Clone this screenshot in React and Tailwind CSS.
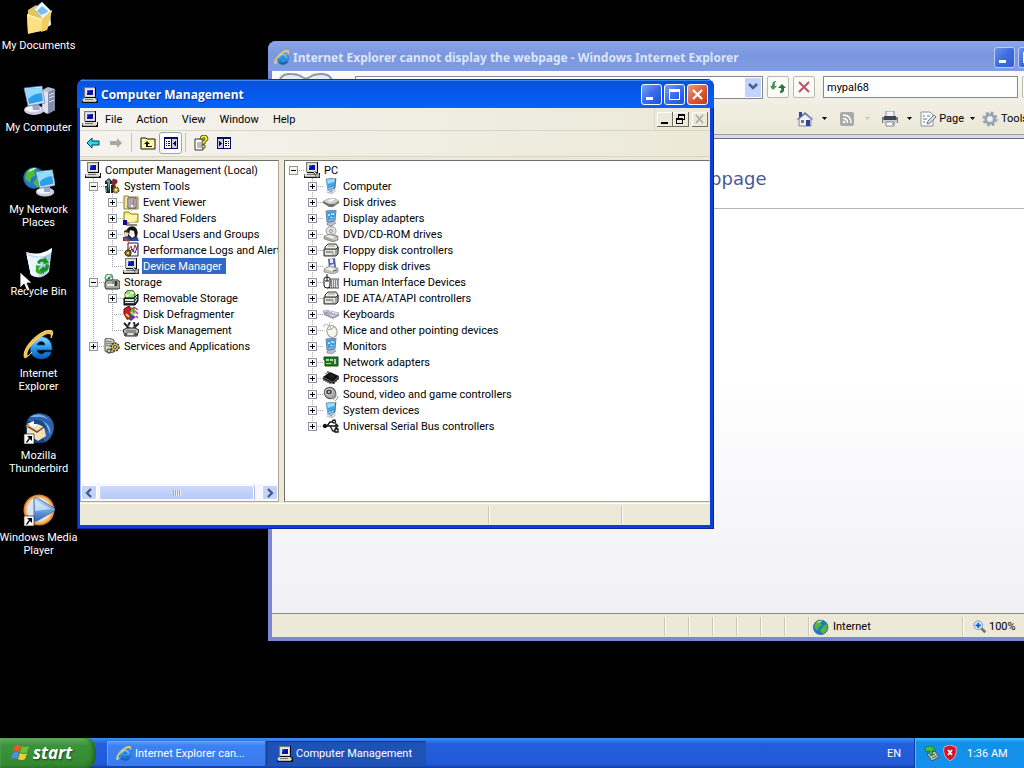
import React from "react";

/* ---------- Logos and icons ---------- */

function Svg({ size = 16, className = "", box = 16, children }) {
  return (
    <svg width={size} height={size} viewBox={`0 0 ${box} ${box}`} className={`block shrink-0 ${className}`} aria-hidden="true">
      {children}
    </svg>
  );
}

function ComputerIcon({ size, wrench }) {
  return (
    <Svg size={size}>
      <path d="M2 0h12v10H2z" fill="#d6d3c8" />
      <path d="M2 0h11v1H3v9H2z" fill="#7d7d78" />
      <path d="M13 0h1v11H3v-1h10z" fill="#000" />
      <path d="M4 2h8v7H4z" fill="#e9e9ee" />
      <path d="M5 3h6v5H5z" fill="#0a12a8" />
      <path d="M5 3h3v1H6v2H5z" fill="#3d54e6" />
      <path d="M2 11h11l2 3H0z" fill="#dedbd0" />
      <path d="M0 14h15v-3h1v5H0z" fill="#111" />
      <path d="M0 12h1v2H0z" fill="#777" />
      <path d="M1 14h13v1H1z" fill="#b5b2a8" />
      <path d="M3 12h8v1H3z" fill="#77756e" />
      {wrench && (
        <g>
          <path d="M10 10l3 3" stroke="#555" strokeWidth="3" />
          <path d="M10 10l3 3" stroke="#eee" strokeWidth="1" />
          <circle cx="13.500" cy="13.500" r="2" fill="#b5b5af" stroke="#444" strokeWidth=".6" />
        </g>
      )}
    </Svg>
  );
}

function IELogo({ size = 16 }) {
  return (
    <Svg size={size} box={32}>
      <defs>
        <linearGradient id="ieBlue" x1="0" y1="0" x2="0" y2="1">
          <stop offset="0" stopColor="#8bdcff" />
          <stop offset=".5" stopColor="#2a9be8" />
          <stop offset="1" stopColor="#0a5bb8" />
        </linearGradient>
      </defs>
      <path d="M27 25C23 30 15 30 10 26C5 20 7 11 13 8C20 4 29 9 29 18V20H14C15 25 20 25 22 22H28ZM14 15H22C21 10 15 11 14 15Z" fill="url(#ieBlue)" stroke="#0b4e93" strokeWidth=".8" />
      <path d="M9 22C3 28 1 30 1 25C1 17 12 5 22 1C29-2 32 1 28 8C29 4 27 2 21 5C12 9 3 20 4 25C4 27 6 26 9 22Z" fill="#f3c33a" stroke="#fff2a0" strokeWidth=".7" />
    </Svg>
  );
}

function DocumentsIcon() {
  return (
    <Svg size={32} box={32}>
      <path d="M5 8l8-5 6 5v20l-14-2z" fill="#e6c552" />
      <path d="M11 7l8-7 9 9-6 10z" fill="#f1faff" stroke="#8bb6d8" strokeWidth=".7" />
      <path d="M14 9l5-5 6 5-4 7z" fill="#7dbbe9" />
      <path d="M18 13l9-4 1 14-7 4z" fill="#e8f5ff" />
      <path d="M4 12l14 5 11-9-5 20-19 3z" fill="#fff0ac" />
      <path d="M4 12l15 5-1 12-13 3z" fill="#fbe182" />
      <path d="M19 17l10-9-5 20-6 2z" fill="#f0cd62" />
      <path d="M5 13l14 5" stroke="#fff9cd" strokeWidth="1.200" />
    </Svg>
  );
}

function DesktopMonitor({ tower }) {
  return (
    <g>
      {tower && (
        <g>
          <path d="M19 6l6-3 7 2v21l-8 4-5-3z" fill="#b9bdd4" />
          <path d="M25 8l7-3v21l-7 4z" fill="#858cae" />
          <path d="M20 7l5 1v21l-5-2z" fill="#dfe2ef" />
          <path d="M26 11l5-2M26 14l5-2M26 18l5-2" stroke="#e8eaf8" />
        </g>
      )}
      <ellipse cx="11" cy="26" rx="10" ry="5" fill="#c9ccdf" />
      <ellipse cx="10" cy="25" rx="8" ry="3" fill="#f2f4fc" />
      <path d="M9 19h7l1 7h-7z" fill="#9da6c9" />
      <path d="M1 4l18-2 3 17-17 3z" fill="#cfe3f6" stroke="#6077a8" strokeWidth=".7" />
      <path d="M3 5l15-1 2 13-14 3z" fill="#2e9eeb" />
      <path d="M3 5l15-1 1 5q-8 0-14 6z" fill="#92dcff" />
    </g>
  );
}

function MyComputerIcon() {
  return <Svg size={32} box={32}><DesktopMonitor tower /></Svg>;
}

function GlobeShape() {
  return (
    <g>
      <circle cx="11" cy="12" r="10.500" fill="#2276cb" />
      <path d="M3 7q3-6 11-5l-3 4 2 3-5 3-1 5-5-4zM15 10l6-3v8l-6 7-5-5z" fill="#54b83b" />
      <path d="M5 6q4-5 9-4l-6 3z" fill="#dcfbd2" />
      <circle cx="11" cy="12" r="10.500" fill="none" stroke="#144f7c" strokeWidth=".8" />
    </g>
  );
}

function NetworkIcon() {
  return (
    <Svg size={32} box={32}>
      <GlobeShape />
      <g transform="translate(12 2) scale(.92)"><DesktopMonitor /></g>
    </Svg>
  );
}

function RecycleIcon() {
  return (
    <Svg size={32} box={32}>
      <path d="M3 4q13 5 26-4l-3 24q-8 9-18 3z" fill="#c5dcec" />
      <path d="M3 4q13 5 26-4l-1 6Q15 12 3 4z" fill="#f5fcff" />
      <path d="M4 7q8 4 14 2L15 29q-4 0-7-2z" fill="#eaf5fc" />
      <path d="M20 9l8-4-3 18-7 6z" fill="#a7c9df" />
      <path d="M14 15q2-5 7-4l1-2 4 6-6 1 1-2q-4-1-4 2zM26 17q0 6-5 7v2l-5-4 5-4v2q2-1 2-4z" fill="#169223" />
      <path d="M13 17l5 1-2 2q-1 3 3 3v3q-8 0-6-6z" fill="#31ad2e" />
      <path d="M4 6l4 20" stroke="white" strokeWidth="1" />
    </Svg>
  );
}

function Shortcut() {
  return (
    <g>
      <path d="M1 22h10v10H1z" fill="#fff" stroke="#222" strokeWidth=".7" />
      <path d="M4 24h5v5l-2-2-3 4-1-1 3-4z" fill="#000" />
    </g>
  );
}

function ThunderbirdIcon() {
  return (
    <Svg size={32} box={32}>
      <path d="M3 12Q5 0 17 2q13 0 14 15-1 9-8 13-11 4-19-4-2-7-1-14z" fill="#173e78" />
      <path d="M5 8Q11-1 21 2q10 3 10 14-2 10-9 14-5-12-17-22z" fill="#2d62a8" />
      <path d="M7 5q10-6 19 3-7-4-12-3zM20 9q9 5 7 14-2-8-7-14z" fill="#76b4e8" />
      <path d="M4 14l8-4 9 5 2 9-8 5-11-7z" fill="#f5deb8" />
      <path d="M4 14l10 6 7-5" fill="none" stroke="#704d35" strokeWidth="1.500" />
      <path d="M4 12l7-3 4 4-5 2z" fill="#fff" />
      <path d="M2 14l4-2 1 3z" fill="#d8a536" />
      <path d="M11 8q10-2 14 12-6-9-14-8z" fill="#174a8c" />
      <Shortcut />
    </Svg>
  );
}

function MediaIcon() {
  return (
    <Svg size={32} box={32}>
      <defs>
        <radialGradient id="wmpRing"><stop offset=".6" stopColor="#fff4dd" /><stop offset=".85" stopColor="#f2b469" /><stop offset="1" stopColor="#c96a19" /></radialGradient>
        <linearGradient id="wmpPlay" x1="0" y1="0" x2="0" y2="1"><stop offset="0" stopColor="#c1e2ff" /><stop offset="1" stopColor="#286ac1" /></linearGradient>
      </defs>
      <circle cx="16" cy="16" r="15.500" fill="url(#wmpRing)" />
      <circle cx="15" cy="15" r="11" fill="#dce5ef" />
      <path d="M11 5q0-2 3-1l17 10q2 2 0 3L14 27q-3 1-3-1z" fill="url(#wmpPlay)" stroke="#507eae" />
      <path d="M12 6l16 9-16 2z" fill="#e4f4ff" opacity=".65" />
      <Shortcut />
    </Svg>
  );
}

function FlagLogo() {
  return (
    <Svg size={20} box={20}>
      <path d="M4 3q3-2 6 0L8 9Q5 7 2 9z" fill="#ee5527" />
      <path d="M11 3q4 2 7 0l-2 6q-3 2-7 0z" fill="#73bd38" />
      <path d="M2 10q3-2 6 0l-2 6q-3-2-6 0z" fill="#4c8df2" />
      <path d="M9 10q4 2 7 0l-2 6q-3 2-7 0z" fill="#f7cb36" />
    </Svg>
  );
}

/* Small glyphs used by the two trees */
const glyphs = {
  tools: (
    <g>
      <path d="M1 3l4-3 3 3v3H6v9H3V6H1z" fill="#222" />
      <path d="M2 3l3-2 1 2-1 10H4V5z" fill="#6aa8a3" />
      <path d="M9 1l4 1v3l-2 1 1 8H9L8 4z" fill="#a11b1b" stroke="#333" strokeWidth=".6" />
      <path d="M1 8h3l1 7H2zM7 7h2v8H7z" fill="#222" />
      <path d="M2 9h1v5H2z" fill="#3f8b80" />
      <circle cx="12" cy="12" r="3" fill="#b89e24" stroke="#322b0c" strokeDasharray="2 1" />
      <circle cx="12" cy="12" r="1" fill="#fff" />
    </g>
  ),
  event: (
    <g>
      <path d="M1 2h4l1 1h9v12H1z" fill="#efe3a0" stroke="#877a3c" />
      <path d="M5 4h8v10H5z" fill="#fff" stroke="#444" />
      <path d="M7 5v8M11 5v8" stroke="#5c4688" />
      <path d="M8 6h3M8 8h3M8 10h3" stroke="#c12e2e" />
    </g>
  ),
  shared: (
    <g>
      <path d="M1 2h5l2 2h7v8H1z" fill="#f4ea7b" stroke="#877f24" />
      <path d="M2 5h12l-2 7H2z" fill="#fff6a5" />
      <path d="M0 11h4l3 3h7v2H4l-4-2z" fill="#8e887c" />
      <path d="M0 10h4v5H0z" fill="#101080" />
    </g>
  ),
  users: (
    <g>
      <path d="M4 3q3-4 8-2 4 3 2 9l-4 5-5-3z" fill="#111" />
      <path d="M7 4l4 1 1 5-3 2-3-3z" fill="#f7f2e5" />
      <path d="M1 5l4-2 1 5-4 2z" fill="#333" />
      <path d="M2 6l4 1-2 4-3-1z" fill="#ead7b4" />
      <path d="M0 11l5-1 3 3 6-3 2 5H0z" fill="#28489d" />
      <path d="M1 13l5 2" stroke="#d23c28" strokeWidth="2" />
    </g>
  ),
  performance: (
    <g>
      <path d="M5 1h10v13H5z" fill="#fff" stroke="#222" />
      <path d="M5 9l3-5 2 6 2-7 2 5" fill="none" stroke="#cc2036" />
      <path d="M6 11l3-4 3 4 3-8" fill="none" stroke="#2337ad" />
      <circle cx="5" cy="11" r="3" fill="#c5a82b" stroke="#40340b" />
      <path d="M5 7v8M1 11h8M3 8l5 6M8 8l-5 6" stroke="#5b4b14" />
      <circle cx="5" cy="11" r="1" fill="#fff" />
    </g>
  ),
  storage: (
    <g>
      <circle cx="5" cy="4" r="4" fill="#d9f4dc" stroke="#477c64" />
      <path d="M5 4l2-3 2 2zM5 4L1 5l2 2z" fill="#49b875" />
      <circle cx="5" cy="4" r="1" fill="#333" />
      <path d="M1 8l3-2h10l2 2v6l-2 1H2l-1-2z" fill="#a8aaa3" stroke="#333" />
      <path d="M8 6h6v6H8z" fill="#858982" />
      <path d="M3 10h7v2H3z" fill="#edefe8" />
      <path d="M11 7h2v5h-2z" fill="#333" />
    </g>
  ),
  removable: (
    <g>
      <circle cx="7" cy="5" r="5" fill="#8ee18c" stroke="#1b411e" />
      <path d="M7 5l1-4 4 2zM7 5l-4 3-1-4z" fill="#f2ff93" />
      <path d="M1 8h10l4-4v7l-3 4H1z" fill="#313736" stroke="#000" />
      <path d="M2 9h9v2H2zM2 12h9v1H2z" fill="#dce7e3" />
      <path d="M12 9l2-3M12 12l2-3" stroke="#fff" />
    </g>
  ),
  defrag: (
    <g>
      <path d="M1 3l5-3 3 4-3 7-5-3z" fill="#d91429" stroke="#4b1010" />
      <path d="M7 4l4-3v7l-5 4z" fill="#64bb4b" stroke="#245e34" />
      <path d="M2 10l5-3 6 4-5 4z" fill="#573e93" />
      <path d="M1 9l3 5 3-1-2-4z" fill="#a3202c" />
      <path d="M3 8l3 3M8 6l3 3" stroke="#efce36" strokeWidth="2" />
      <path d="M11 1l4 3M12 5l3 3M13 10l2 2" stroke="#b83baf" strokeWidth="1.500" />
    </g>
  ),
  diskManagement: (
    <g>
      <path d="M1 1l6 6M7 0L4 6M11 0l1 6M16 1l-7 7" stroke="#222" strokeWidth="2" />
      <path d="M4 2l3 4M10 1l1 4" stroke="#63a9df" />
      <path d="M0 8l4-2h8l4 2-2 6H2z" fill="#bbb" stroke="#222" />
      <path d="M3 8h10v3H3z" fill="#8c8c88" />
      <path d="M1 11h3v3H1zM11 11h3v3h-3z" fill="#555" />
      <path d="M5 12h5" stroke="#fff" />
    </g>
  ),
  services: (
    <g>
      <path d="M1 1l4-1 5 2v12l-5 1-4-2z" fill="#d5d4ca" stroke="#55554f" />
      <path d="M2 3l6 1M2 5l6 1M2 7l5 1" stroke="#777" />
      <circle cx="11" cy="9" r="4" fill="#cebd61" stroke="#3b371f" strokeWidth="1.500" strokeDasharray="2 1" />
      <circle cx="11" cy="9" r="1.500" fill="#fff" stroke="#333" />
      <circle cx="5" cy="13" r="2" fill="#e5da79" stroke="#333" />
    </g>
  ),
  monitor: (
    <g>
      <path d="M4 12l6-2 3 3-4 3-5-1z" fill="#b9bed1" />
      <path d="M3 13l5 1 4-1" stroke="#eef1fa" strokeWidth="1" />
      <path d="M3 1l10-1-1 10-7 2z" fill="#98cee9" stroke="#6989a2" strokeWidth=".8" />
      <path d="M4 2l7-1v8l-6 1z" fill="#37a6ee" />
      <path d="M4 2l7-1v3L5 6z" fill="#94e1ff" />
      <path d="M12 1h1l-1 10h-1z" fill="#426794" />
    </g>
  ),
  display: (
    <g>
      <path d="M4 13l6-2 3 2-4 3-5-1z" fill="#b9bed1" stroke="#707ca0" strokeWidth=".6" />
      <path d="M3 1l10-1-1 11-8 1z" fill="#85badb" stroke="#48708e" strokeWidth=".8" />
      <path d="M4 2l8-1-1 8-6 1z" fill="#3f97de" />
      <path d="M5 4h2v2H5zM8 3h3v2H8zM7 7h3v1H7z" fill="#a8e5ff" />
    </g>
  ),
  disk: (
    <g>
      <path d="M0 7l6-3h6l4 3v2l-6 4H6L0 9z" fill="#6f6f6f" />
      <path d="M0 7l6-3h6l4 3-6 3H6z" fill="#cfcfca" />
      <path d="M4 7l4-2h4l-4 3z" fill="#f7f7f2" />
      <path d="M11 10l3-2v1l-3 2z" fill="#90d060" />
    </g>
  ),
  dvd: (
    <g>
      <ellipse cx="8" cy="5" rx="5" ry="4.500" fill="#e4e4e6" stroke="#999" />
      <circle cx="8" cy="5" r="1.500" fill="#fff" stroke="#888" />
      <path d="M1 10l6-2 8 2v4l-5 2-9-3z" fill="#a7a7a4" stroke="#777" strokeWidth=".6" />
      <path d="M2 10l5-1 6 2-4 2z" fill="#eee" />
      <path d="M10 13l4-1v1l-4 1z" fill="#e9e9e9" />
    </g>
  ),
  controller: (
    <g>
      <path d="M2 5l3-3h8l2 3v4H2z" fill="#eeeeea" stroke="#333" />
      <path d="M5 4h7" stroke="#999" />
      <path d="M1 7h12l2-2v7l-2 2H1z" fill="#a5a6a2" stroke="#333" />
      <path d="M2 8h10v5H2z" fill="#e3e3de" />
      <path d="M3 10h7" stroke="#555" />
      <path d="M9 12h2" stroke="#79a35e" />
    </g>
  ),
  floppy: (
    <g>
      <path d="M5 1l7-1 1 9-7 2z" fill="#5968a6" />
      <path d="M7 1h3v4H7zM7 7l4-1v3l-4 1z" fill="#e8ecfa" />
      <path d="M1 11l5-3 9 2v4l-5 2-9-2z" fill="#c2c2c1" stroke="#757575" strokeWidth=".6" />
      <path d="M2 11l5-2 6 2-4 2z" fill="#f0f0ee" />
      <path d="M10 13l4-1" stroke="#555" />
    </g>
  ),
  hid: (
    <g>
      <path d="M4 5h12v9H4z" fill="#ddd" stroke="#555" />
      <path d="M6 7h9M6 9h9M6 11h9M6 13h8" stroke="#333" strokeDasharray="1 1" />
      <path d="M1 5q0-2 3-2t3 2v6q0 3-3 3t-3-3z" fill="#fff" stroke="#111" />
      <path d="M4 3V0M2 7h4M4 3v4" stroke="#111" />
    </g>
  ),
  keyboard: (
    <g>
      <path d="M0 5l3-1 13 3v3l-6 3L1 9z" fill="#9d9fb4" />
      <path d="M0 5l3-1 13 3-6 4z" fill="#f1f2fa" stroke="#999cb3" strokeWidth=".6" />
      <path d="M3 5l10 4M2 6l9 3M6 5l-2 2M9 6L7 8M12 7l-2 2" stroke="#9396ad" strokeWidth=".8" />
    </g>
  ),
  mouse: (
    <g>
      <path d="M6 4q-5-4-5 1M6 4q1-2 1-4" fill="none" stroke="#aaa" />
      <ellipse cx="9" cy="9.500" rx="5" ry="6" transform="rotate(-20 9 9.500)" fill="#f6f6ed" stroke="#9b9b94" />
      <path d="M5 8q4-1 6-3M7 5l2 3" fill="none" stroke="#aaa" />
    </g>
  ),
  network: (
    <g>
      <path d="M1 3h14v9H2V6H1z" fill="#1d752d" stroke="#164c21" />
      <path d="M3 5h3v2H3zM7 5h3v2H7zM3 9h5v1H3z" fill="#a4e481" />
      <path d="M11 5h2v5h-2z" fill="#b9c3b9" />
      <path d="M4 12v1M6 12v1M8 12v1M10 12v1" stroke="#c2a634" />
    </g>
  ),
  cpu: (
    <g>
      <path d="M0 7l7-5 9 4-6 6z" fill="#111" />
      <path d="M0 7l10 5 6-6v2l-6 6L0 9z" fill="#333" />
      <path d="M1 9v2M3 10v2M5 11v2M7 12v2M11 12v2M13 10v2M15 8v2M3 4V3M5 3V1" stroke="#000" />
      <path d="M5 6l3-2 4 2-3 3z" fill="#222" />
    </g>
  ),
  sound: (
    <g>
      <ellipse cx="7" cy="7" rx="6" ry="5.500" transform="rotate(35 7 7)" fill="#aaa" stroke="#555" />
      <ellipse cx="6" cy="6" rx="3.500" ry="3" fill="#444" stroke="#ddd" />
      <circle cx="6" cy="6" r="1" fill="#ddd" />
      <path d="M13 8q1 4-3 6M15 10q0 3-3 5" fill="none" stroke="#999" />
    </g>
  ),
  usb: (
    <g fill="none" stroke="#111" strokeWidth="1.300">
      <path d="M1 8h13M4 8l3-4h3M7 8l3 5h2" />
      <circle cx="2" cy="8" r="1.500" fill="#111" />
      <circle cx="11" cy="3.500" r="1.500" />
      <path d="M12 11h3v3h-3zM13 6l2 2-2 2z" fill="#fff" />
    </g>
  ),
};

function Glyph({ name }) {
  if (name === "computer") return <ComputerIcon />;
  if (name === "device") return <ComputerIcon wrench />;
  return <Svg>{glyphs[name]}</Svg>;
}

/* ---------- Tree ---------- */

function Slot({ kind, sign, label }) {
  const drawing = (
    <svg width="19" height="16" viewBox="0 0 19 16" shapeRendering="crispEdges" className="block shrink-0" aria-hidden="true">
      <g stroke="#a5a5a5" strokeDasharray="1 1">
        {(kind === "line" || kind === "tee" || kind === "end") && <path d="M8.500 0V8" />}
        {(kind === "line" || kind === "tee") && <path d="M8.500 8V16" />}
        {kind !== "line" && kind !== "blank" && <path d="M8 8.500H19" />}
      </g>
      {sign && (
        <g>
          <path d="M4.500 4.500h8v8h-8z" fill="#f6f5ef" stroke="#8c98a8" />
          <path d={sign === "+" ? "M6 8.500h5M8.500 6v5" : "M6 8.500h5"} stroke="#000" />
        </g>
      )}
    </svg>
  );
  if (!sign) return drawing;
  return (
    <button type="button" aria-label={`${sign === "+" ? "Expand" : "Collapse"} ${label}`} className="block shrink-0">
      {drawing}
    </button>
  );
}

function Row({ slots = [], sign, icon, label, selected }) {
  return (
    <li className="flex h-4 items-center whitespace-nowrap">
      {slots.map((kind, i) => (
        <Slot key={i} kind={kind} sign={i === slots.length - 1 ? sign : undefined} label={label} />
      ))}
      <Glyph name={icon} />
      <span className={`ml-[3px] flex h-4 shrink-0 items-center px-px ${selected ? "bg-[#316ac5] pr-1 text-white" : ""}`}>{label}</span>
    </li>
  );
}

const consoleTree = [
  { icon: "computer", label: "Computer Management (Local)" },
  { slots: ["tee"], sign: "-", icon: "tools", label: "System Tools" },
  { slots: ["line", "tee"], sign: "+", icon: "event", label: "Event Viewer" },
  { slots: ["line", "tee"], sign: "+", icon: "shared", label: "Shared Folders" },
  { slots: ["line", "tee"], sign: "+", icon: "users", label: "Local Users and Groups" },
  { slots: ["line", "tee"], sign: "+", icon: "performance", label: "Performance Logs and Alerts" },
  { slots: ["line", "end"], icon: "device", label: "Device Manager", selected: true },
  { slots: ["tee"], sign: "-", icon: "storage", label: "Storage" },
  { slots: ["line", "tee"], sign: "+", icon: "removable", label: "Removable Storage" },
  { slots: ["line", "tee"], icon: "defrag", label: "Disk Defragmenter" },
  { slots: ["line", "end"], icon: "diskManagement", label: "Disk Management" },
  { slots: ["end"], sign: "+", icon: "services", label: "Services and Applications" },
];

const devices = [
  ["monitor", "Computer"],
  ["disk", "Disk drives"],
  ["display", "Display adapters"],
  ["dvd", "DVD/CD-ROM drives"],
  ["controller", "Floppy disk controllers"],
  ["floppy", "Floppy disk drives"],
  ["hid", "Human Interface Devices"],
  ["controller", "IDE ATA/ATAPI controllers"],
  ["keyboard", "Keyboards"],
  ["mouse", "Mice and other pointing devices"],
  ["display", "Monitors"],
  ["network", "Network adapters"],
  ["cpu", "Processors"],
  ["sound", "Sound, video and game controllers"],
  ["monitor", "System devices"],
  ["usb", "Universal Serial Bus controllers"],
];

/* ---------- Window chrome ---------- */

function CaptionButton({ kind, inactive }) {
  const tone =
    kind === "close"
      ? "bg-linear-to-br from-[#f09a80] via-[#e05a38] to-[#c23a15]"
      : inactive
        ? "bg-linear-to-br from-[#6d93ea] via-[#3c6be0] to-[#3560d8]"
        : "bg-linear-to-br from-[#7ba1f5] via-[#3a6ceb] to-[#1d4fd8]";
  return (
    <button type="button" aria-label={kind} className={`size-[21px] shrink-0 rounded-[3px] border ${inactive ? "border-[#b9cbf6]" : "border-white"} ${tone}`}>
      <svg width="19" height="19" viewBox="0 0 19 19" className="block" aria-hidden="true">
        {kind === "minimize" && <path d="M4 12h7v3H4z" fill="#fff" />}
        {kind === "maximize" && <path d="M4 4h11v11H4zM5 7v7h9V7z" fill="#fff" fillRule="evenodd" />}
        {kind === "close" && <path d="M5 5l9 9M14 5l-9 9" stroke="#fff" strokeWidth="2.200" />}
      </svg>
    </button>
  );
}

function MdiButton({ kind }) {
  return (
    <button type="button" aria-label={`${kind} child window`} className="h-[15px] w-4 border-r border-b border-[#716f64] bg-[#ece9d8] shadow-[inset_1px_1px_0_#fff]">
      <svg width="15" height="14" viewBox="0 0 15 14" shapeRendering={kind === "close" ? "auto" : "crispEdges"} className="block" aria-hidden="true">
        {kind === "minimize" && <path d="M4 10h7v2H4z" />}
        {kind === "restore" && <path d="M5 2h7v6h-2v4H3V6h2zM6 4v2h4v1h1V4zM4 8v3h5V8z" fillRule="evenodd" />}
        {kind === "close" && <path d="M4 3l7 8M11 3l-7 8" stroke="#aca899" strokeWidth="1.600" />}
      </svg>
    </button>
  );
}

function Caret({ faded }) {
  return (
    <svg width="5" height="3" viewBox="0 0 5 3" className="block shrink-0" aria-hidden="true">
      <path d="M0 0h5L2.500 3z" fill={faded ? "#c9c5b2" : "#000"} />
    </svg>
  );
}

function BrowserWindow() {
  return (
    <section aria-label="Internet Explorer" className="absolute top-[41px] -right-[44px] bottom-[97px] left-[268px] flex flex-col overflow-hidden rounded-t-lg bg-[#7a86d8] px-1 pb-1">
      <header className="-mx-1 flex h-[30px] shrink-0 items-center bg-linear-to-b from-[#8ba5e8] via-[#7a96df] to-[#7f9ee6] pt-[3px] pr-[5px] pl-[6px]">
        <IELogo size={16} />
        <h2 className="ml-[3px] flex-1 truncate font-['Noto_Sans','Open_Sans',sans-serif] text-[12px] leading-4 font-bold text-[#dce6fb]">
          Internet Explorer cannot display the webpage - Windows Internet Explorer
        </h2>
        <div className="flex gap-[3px]">
          <CaptionButton kind="minimize" inactive />
          <CaptionButton kind="maximize" inactive />
          <CaptionButton kind="close" inactive />
        </div>
      </header>

      <div className="flex h-8 shrink-0 items-center bg-linear-to-b from-[#fbfbf8] to-[#f1efe4] pr-5 pl-1">
        <svg width="60" height="30" viewBox="0 0 60 30" className="block shrink-0" aria-hidden="true">
          <path d="M15 2q7 0 11 3t8 0q4-3 11-3 12 0 12 12T45 27H15Q3 27 3 14T15 2z" fill="#e8ebf1" stroke="#8f98ab" strokeWidth="2" />
          <path d="M9 14l7-6v4h7v4h-7v4zM51 14l-7-6v4h-7v4h7v4z" fill="#a8b4c9" />
        </svg>
        <div className="ml-[19px] flex h-[23px] flex-1 border border-[#808890] bg-white p-px">
          <input aria-label="Address" className="min-w-0 flex-1 px-1 outline-none" />
          <button type="button" aria-label="Show addresses" className="flex w-4 items-center justify-center bg-[#c3d3fb]">
            <svg width="10" height="8" viewBox="0 0 10 8" aria-hidden="true"><path d="M1 1l4 4 4-4" fill="none" stroke="#4d6185" strokeWidth="2.500" /></svg>
          </button>
        </div>
        <div className="ml-1 flex gap-1">
          <button type="button" aria-label="Refresh" className="flex size-[22px] items-center justify-center rounded-[2px] border border-[#bbb9ae] bg-[#fafaf7]">
            <Svg>
              <path d="M6 2v1Q4 3 5 7h2l-4 4-3-4h2Q2 2 6 2z" fill="#3f9253" />
              <path d="M12 5l4 4h-2q1 5-4 5v-2q2 0 1-3H8z" fill="#27733d" />
            </Svg>
          </button>
          <button type="button" aria-label="Stop" className="flex size-[22px] items-center justify-center rounded-[2px] border border-[#bbb9ae] bg-[#fafaf7]">
            <svg width="12" height="12" viewBox="0 0 12 12" aria-hidden="true"><path d="M1 1l10 10M11 1L1 11" stroke="#bc5365" strokeWidth="2" /></svg>
          </button>
        </div>
        <input aria-label="Search" defaultValue="mypal68" className="ml-2 h-[22px] w-[195px] border border-[#808890] bg-white px-[3px] outline-none" />
        <button type="button" aria-label="Run search" className="ml-1 size-[22px] rounded-[2px] border border-[#bbb9ae] bg-[#fafaf7]" />
      </div>

      <div className="flex h-[31px] shrink-0 items-center justify-end bg-linear-to-b from-[#f1efe4] to-[#ebe8d6] pr-[25px]">
        <button type="button" aria-label="Home" className="flex items-center gap-[9px]">
          <Svg>
            <path d="M0 8l8-7 8 7-1 1-7-6-7 6z" fill="#6979a8" />
            <path d="M2 1h3v5H2z" fill="#3e4888" />
            <path d="M2 8l6-5 6 5v7H2z" fill="#eef0fa" stroke="#7c86ae" />
            <path d="M9 9h4v6H9z" fill="#343f9c" />
            <path d="M4 9h3v3H4z" fill="#8b7546" />
          </Svg>
          <Caret />
        </button>
        <button type="button" aria-label="Feeds" className="ml-[13px] flex items-center gap-[11px]">
          <svg width="14" height="14" viewBox="0 0 14 14" aria-hidden="true">
            <rect width="14" height="14" rx="2" fill="#a9aaa5" />
            <g fill="none" stroke="#fff" strokeWidth="1.500"><path d="M3 3q8 0 8 8M3 6.500q4.500 0 4.500 4.500" /></g>
            <circle cx="4" cy="10" r="1.200" fill="#fff" />
          </svg>
          <Caret faded />
        </button>
        <button type="button" aria-label="Print" className="ml-[12px] flex items-center gap-[9px]">
          <Svg>
            <path d="M4 0h8v6H4z" fill="#eef2fb" stroke="#89909c" />
            <path d="M0 6h16v6H0z" fill="#777b82" />
            <path d="M2 5h12v4H2z" fill="#42464e" />
            <path d="M1 9h14v3H1z" fill="#c9ccd2" />
            <path d="M4 11h8v4H4z" fill="#fff" stroke="#888" />
            <path d="M10 13h2" stroke="#4665bf" />
          </Svg>
          <Caret />
        </button>
        <button type="button" className="ml-[8px] flex items-center gap-[3px]">
          <Svg>
            <path d="M1 1h9l3 3v11H1z" fill="#f8f9fa" stroke="#909498" />
            <path d="M3 5h2M7 5h3M3 8h4M3 11h2" stroke="#69738a" />
            <path d="M7 13l1-3 6-6 2 2-6 6z" fill="#d9dce2" stroke="#747b84" />
          </Svg>
          Page
          <span className="ml-[3px]"><Caret /></span>
        </button>
        <button type="button" className="ml-[7px] flex items-center gap-[3px]">
          <Svg>
            <circle cx="8" cy="8" r="6" fill="none" stroke="#9aa6b2" strokeWidth="3" strokeDasharray="2.700 2" />
            <circle cx="8" cy="8" r="4.500" fill="#bdcad5" stroke="#8f9fae" strokeWidth="2" />
            <circle cx="8" cy="8" r="2.500" fill="#f3f2ec" />
          </Svg>
          Tools
          <span className="ml-[3px]"><Caret /></span>
        </button>
      </div>

      <div className="h-[5px] shrink-0 border-t border-b border-t-[#9c9eac] border-b-[#6f6f7c] bg-[#d9dae8]" />
      <article className="flex-1 bg-linear-to-b from-white via-white to-[#f0f0f5] pt-[28px]">
        <h1 className="mr-[38px] border-b border-[#b5b5b5] pb-[17px] pl-[82px] font-['DejaVu_Sans',sans-serif] text-[18px] leading-6 whitespace-nowrap text-[#4a5a94]">
          Internet Explorer cannot display the webpage
        </h1>
      </article>

      <footer className="flex h-[24px] shrink-0 items-center border-t border-[#8d8b80] bg-[#ece9d8] pt-[2px]">
        <span className="flex-1" />
        {[1, 2, 3, 4, 5, 6].map((n) => (
          <span key={n} className="h-[19px] w-6 border-l border-[#c9c6b5] shadow-[inset_1px_0_0_#fff]" />
        ))}
        <span className="flex h-[19px] w-[154px] items-center gap-1 border-l border-[#c9c6b5] pl-1 shadow-[inset_1px_0_0_#fff]">
          <Svg size={16} box={23}><GlobeShape /></Svg>
          Internet
        </span>
        <button type="button" className="flex h-[19px] w-[102px] items-center gap-[2px] border-l border-[#c9c6b5] pl-[10px] shadow-[inset_1px_0_0_#fff]">
          <Svg size={14}>
            <path d="M9 9l5 5" stroke="#777460" strokeWidth="3" />
            <circle cx="6" cy="6" r="5" fill="#dcecff" stroke="#7390b6" />
            <path d="M6 3v6M3 6h6" stroke="#1855bd" strokeWidth="2" />
          </Svg>
          100%
        </button>
      </footer>
    </section>
  );
}

function ToolButton({ label, pressed, children }) {
  return (
    <button type="button" aria-label={label} className={`flex h-[22px] w-[23px] shrink-0 items-center justify-center rounded-[3px] border ${pressed ? "border-[#98a5b5] bg-white" : "border-transparent"}`}>
      {children}
    </button>
  );
}

/* A framed window with one pane marked by an arrow */
function PaneIcon({ flip }) {
  return (
    <svg width="14" height="12" viewBox="0 0 14 12" shapeRendering="crispEdges" className="block" aria-hidden="true">
      <g transform={flip ? "translate(14 0) scale(-1 1)" : undefined}>
        <path d="M0 0h14v12H0z" fill="#0a0a60" />
        <path d="M1 2h6v9H1z" fill="#fff" />
        <path d="M8 2h5v9H8z" fill="#c9cfe0" />
        <path d="M2 4h1v1H2zM4 4h2v1H4zM2 6h1v1H2zM4 6h2v1H4zM2 8h1v1H2zM4 8h2v1H4z" fill="#111" />
        <path d="M12 3v7L9 6.500z" fill="#0a0a30" />
      </g>
    </svg>
  );
}

function ScrollArrow({ left }) {
  return (
    <button type="button" aria-label={left ? "Scroll left" : "Scroll right"} className="flex h-[15px] w-4 items-center justify-center rounded-[2px] border border-white bg-[#c3d3fb]">
      <svg width="8" height="10" viewBox="0 0 8 10" aria-hidden="true">
        <path d={left ? "M6 1L2 5l4 4" : "M2 1l4 4-4 4"} fill="none" stroke="#3f5786" strokeWidth="2.200" />
      </svg>
    </button>
  );
}

function ManagementWindow() {
  return (
    <section aria-label="Computer Management" className="absolute top-[79px] right-[310px] bottom-[209px] left-[77px] flex flex-col overflow-hidden rounded-t-lg bg-[#0a3fdc] pr-1 pb-1 pl-[3px] shadow-[inset_1px_-1px_0_#0524a8,inset_-1px_0_0_#0524a8]">
      <header className="-mr-1 -ml-[3px] flex h-[29px] shrink-0 items-center bg-linear-to-b from-[#0a50d8] via-[#0458ec] to-[#0563f8] pt-[2px] pr-[6px] pl-[5px] shadow-[inset_0_1px_0_#0838b0,inset_0_2px_0_#3a8bf8]">
        <ComputerIcon size={16} />
        <h2 className="ml-[3px] flex-1 truncate font-['Open_Sans','Noto_Sans',sans-serif] text-[12px] leading-4 font-bold text-white [text-shadow:1px_1px_#0c2f8c]">Computer Management</h2>
        <div className="flex gap-[2px]">
          <CaptionButton kind="minimize" />
          <CaptionButton kind="maximize" />
          <CaptionButton kind="close" />
        </div>
      </header>

      <nav aria-label="Menu bar" className="flex h-[23px] shrink-0 items-center border-b border-[#d8d5c4] bg-linear-to-r from-[#f4f3ee] to-[#ece9d8] pr-[2px] pl-[2px]">
        <ComputerIcon size={16} />
        <div className="ml-[7px] flex flex-1 gap-[14px]">
          {["File", "Action", "View", "Window", "Help"].map((m) => (
            <button key={m} type="button">{m}</button>
          ))}
        </div>
        <div className="flex h-full items-center border-l border-[#dbd8c8] pl-[2px]">
          <MdiButton kind="minimize" />
          <MdiButton kind="restore" />
          <span className="w-[3px]" />
          <MdiButton kind="close" />
        </div>
      </nav>

      <div role="toolbar" aria-label="Standard" className="flex h-[26px] shrink-0 items-center border-b border-[#d8d5c4] bg-linear-to-r from-[#f4f3ee] to-[#ece9d8] pb-[2px] pl-px">
        <ToolButton label="Back">
          <svg width="14" height="12" viewBox="0 0 14 12" aria-hidden="true"><path d="M1 6l5-5v3h7v4H6v3z" fill="#27dbea" stroke="#053f4b" /></svg>
        </ToolButton>
        <ToolButton label="Forward">
          <svg width="14" height="12" viewBox="0 0 14 12" aria-hidden="true"><path d="M13 6L8 1v3H1v4h7v3z" fill="#aaa89c" /></svg>
        </ToolButton>
        <span className="mr-1 ml-1 h-[19px] w-px bg-[#c9c6b5]" />
        <ToolButton label="Up one level">
          <Svg>
            <path d="M1 3h5l1 1h8v10H1z" fill="#ffff9c" stroke="#111" />
            <path d="M7 6L4 9h2v3h6v-1H8V9h2z" fill="#111" />
          </Svg>
        </ToolButton>
        <ToolButton label="Show or hide console tree" pressed><PaneIcon /></ToolButton>
        <span className="mx-[3px] h-[19px] w-px bg-[#c9c6b5]" />
        <ToolButton label="Help">
          <Svg>
            <path d="M2 4h8v11H2z" fill="#fff" stroke="#333" />
            <path d="M4 8h4M4 10h5M4 12h4" stroke="#777" />
            <path d="M7 4q0-4 4-4t4 4q0 2-3 3v2H9V6q3 0 3-2 0-2-2-1v1zM9 10h3v3H9z" fill="#f5ef24" stroke="#333" strokeWidth=".8" />
          </Svg>
        </ToolButton>
        <ToolButton label="Show or hide action pane"><PaneIcon flip /></ToolButton>
      </div>

      <div className="flex min-h-0 flex-1 bg-[#ece9d8] pt-[3px] pb-px">
        <div className="flex w-[199px] shrink-0 flex-col overflow-hidden border border-[#aca899] border-t-[#716f64] border-l-[#a8b8dd] bg-white">
          <ul aria-label="Console tree" className="min-h-0 flex-1 overflow-hidden pt-px pl-1">
            {consoleTree.map((r) => <Row key={r.label} {...r} />)}
          </ul>
          <div className="flex h-[17px] shrink-0 items-center bg-[#f6f6fb]">
            <ScrollArrow left />
            <span className="flex flex-1 px-[2px]">
              <span className="flex h-[15px] w-[155px] items-center justify-center gap-px rounded-[2px] border border-white bg-linear-to-b from-[#cbdafd] to-[#b7c9f8] shadow-[1px_0_0_#a8bbe8]">
                {[1, 2, 3, 4].map((n) => <i key={n} className="h-[6px] w-px bg-[#8ea5dd] shadow-[1px_0_0_#eef4fe]" />)}
              </span>
            </span>
            <ScrollArrow />
          </div>
        </div>
        <div className="ml-[5px] flex-1 overflow-hidden border border-[#716f64] border-r-[#ece9d8] border-b-[#aca899] bg-white">
          <ul aria-label="Devices" className="pt-px">
            <Row slots={["start"]} sign="-" icon="device" label="PC" />
            {devices.map(([icon, label], i) => (
              <Row key={label} slots={["blank", i === devices.length - 1 ? "end" : "tee"]} sign="+" icon={icon} label={label} />
            ))}
          </ul>
        </div>
      </div>

      <footer className="flex h-[22px] shrink-0 items-center border-t border-white bg-[#ece9d8]">
        <span className="flex-1" />
        <span className="h-[18px] w-[133px] border-l border-[#c9c6b5] shadow-[inset_1px_0_0_#fff]" />
        <span className="h-[18px] w-[89px] border-l border-[#c9c6b5] shadow-[inset_1px_0_0_#fff]" />
      </footer>
    </section>
  );
}

/* ---------- Desktop ---------- */

const shortcuts = [
  [<DocumentsIcon />, "My Documents"],
  [<MyComputerIcon />, "My Computer"],
  [<NetworkIcon />, "My Network\nPlaces"],
  [<RecycleIcon />, "Recycle Bin"],
  [<IELogo size={32} />, "Internet\nExplorer"],
  [<ThunderbirdIcon />, "Mozilla\nThunderbird"],
  [<MediaIcon />, "Windows Media\nPlayer"],
];

function Taskbar() {
  return (
    <footer className="flex h-[30px] shrink-0 items-stretch bg-linear-to-b from-[#3f8cf3] via-[#245edb] via-20% to-[#2059d8] text-white shadow-[inset_0_-2px_2px_#1941a5]">
      <button type="button" className="flex w-24 items-center gap-[2px] rounded-r-[10px] bg-linear-to-b from-[#5fb05a] via-[#3a933a] via-25% to-[#35862f] pl-[11px] shadow-[inset_-3px_0_4px_#1f6420,inset_0_2px_2px_#7cc77a]">
        <FlagLogo />
        <span className="font-['Open_Sans','Noto_Sans',sans-serif] text-[17px] leading-5 font-bold italic [text-shadow:1px_1px_2px_#1c4518]">start</span>
      </button>
      <div className="ml-[11px] flex min-w-0 flex-1 items-stretch gap-px pt-[3px] pb-[2px]">
        <button type="button" className="flex w-[158px] items-center gap-[3px] rounded-[2px] bg-linear-to-b from-[#5a9bfb] via-[#3c81f3] via-20% to-[#3a7bee] pl-[9px] shadow-[inset_1px_1px_0_#6ba4fa]">
          <IELogo size={16} />
          <span className="truncate">Internet Explorer can...</span>
        </button>
        <button type="button" className="flex w-40 items-center gap-[3px] rounded-[2px] bg-[#1e52b7] pl-[11px] shadow-[inset_1px_1px_1px_#123a86]">
          <ComputerIcon size={16} />
          <span className="truncate">Computer Management</span>
        </button>
      </div>
      <button type="button" aria-label="Input language" className="px-[13px]">EN</button>
      <div className="flex w-[110px] items-center border-l border-[#0c3f9e] bg-linear-to-b from-[#3ebdf8] via-[#1290e8] via-15% to-[#1490ec] pl-[9px] shadow-[inset_1px_0_0_#4ac2f9]">
        <Svg>
          <path d="M3 9l8-3 4 6-7 4z" fill="#bcc8c1" stroke="#41534e" />
          <path d="M6 11l5-2M8 13l5-2" stroke="#465b51" />
          <path d="M1 2l7-1 3 4-3 1 1 4-4-1 1-3-4 1z" fill="#41bf3e" stroke="#176c27" strokeWidth=".7" />
        </Svg>
        <Svg className="ml-[2px]">
          <path d="M8 0l6 2q2 9-6 14Q0 11 2 2z" fill="#cf1729" stroke="#f2a1a8" />
          <path d="M6 5l4 5M10 5l-4 5" stroke="#fff" strokeWidth="1.800" />
        </Svg>
        <time className="ml-[9px] whitespace-nowrap">1:36 AM</time>
      </div>
    </footer>
  );
}

export default function App() {
  return (
    <div className="flex h-screen flex-col overflow-hidden bg-black font-['Roboto','Noto_Sans',sans-serif] text-[11px] leading-[13px] text-black">
      <main className="relative min-h-0 flex-1 overflow-hidden">
        <nav aria-label="Desktop" className="flex w-[77px] flex-col pt-[2px]">
          {shortcuts.map(([icon, label]) => (
            <a key={label} href="#" className="flex h-[82px] flex-col items-center gap-[5px] text-center text-white">
              {icon}
              <span className="whitespace-pre">{label}</span>
            </a>
          ))}
        </nav>
        <BrowserWindow />
        <ManagementWindow />
        <svg width="12" height="20" viewBox="0 0 12 20" className="absolute top-[272px] left-[20px]" aria-hidden="true">
          <path d="M0 0v16l4-4 3 7 3-1-3-7h5z" fill="#fff" stroke="#000" strokeWidth=".8" />
        </svg>
      </main>
      <Taskbar />
    </div>
  );
}
